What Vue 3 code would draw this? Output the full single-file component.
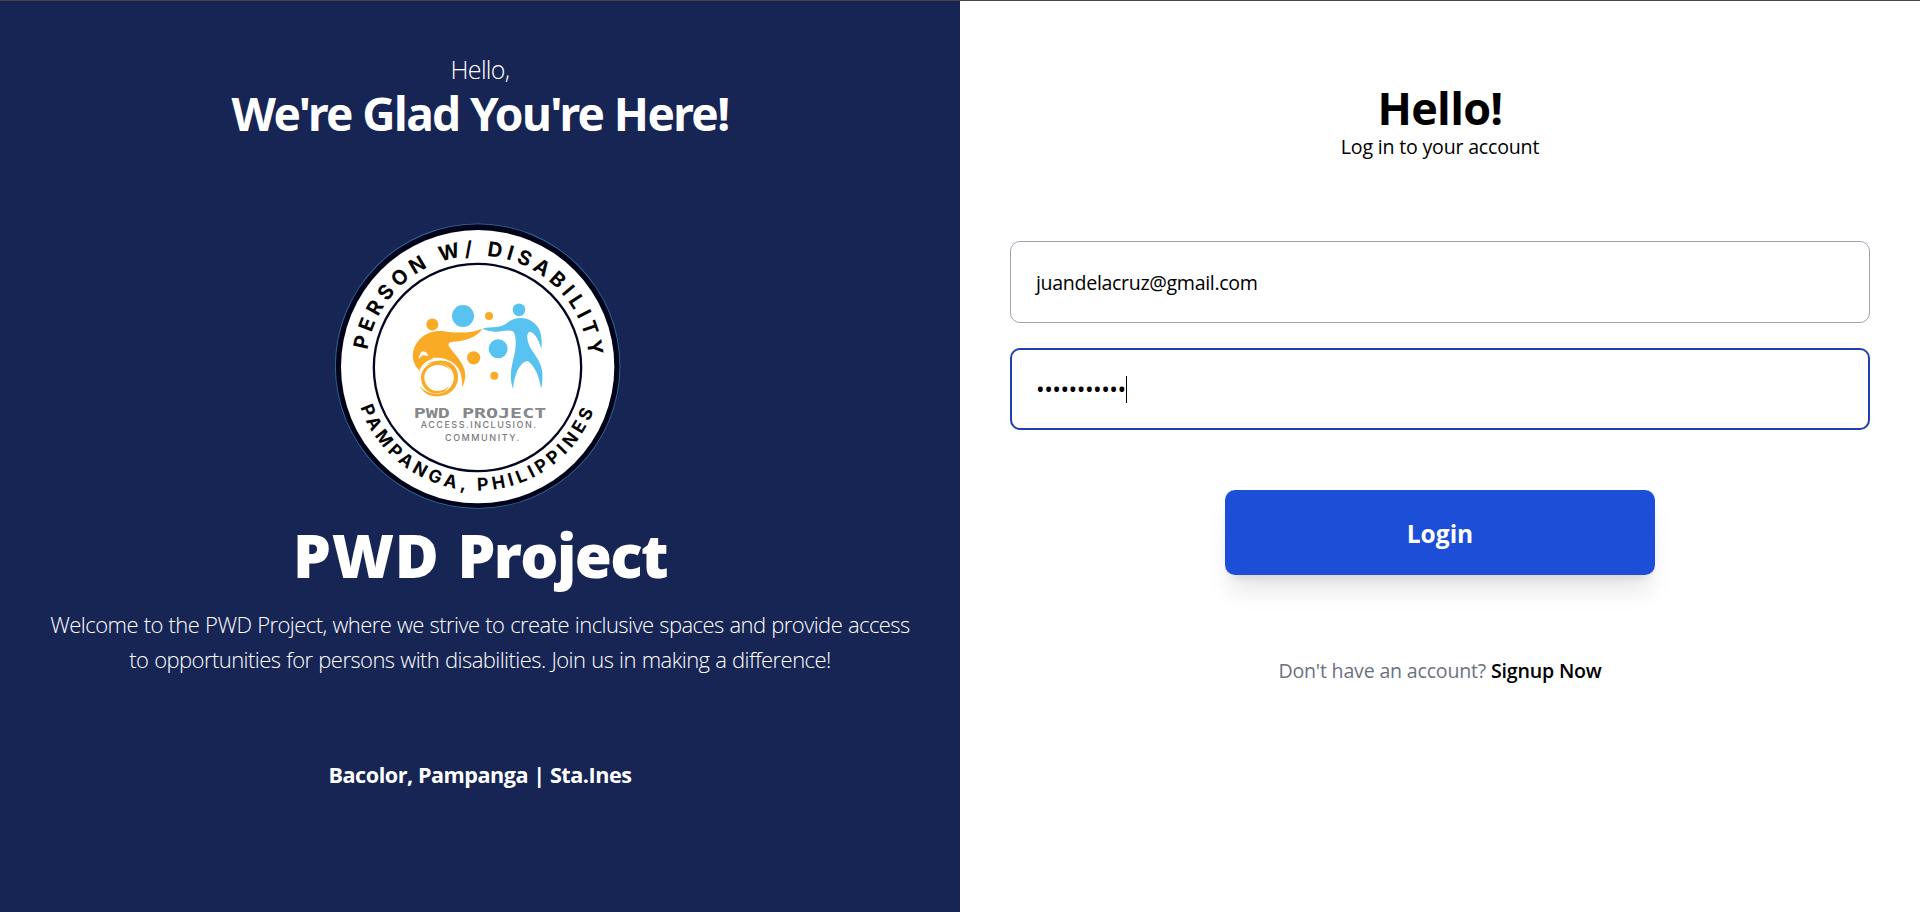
<script setup>
import { ref } from 'vue'

const email = ref('juandelacruz@gmail.com')
const maskedPassword = ref('•'.repeat(11))
</script>

<template>
  <div class="page">
    <section class="intro">
      <p class="greeting">Hello,</p>
      <h1 class="welcome">We're Glad You're Here!</h1>

      <svg class="seal" viewBox="0 0 960 900" role="img" aria-label="PWD Project seal">
        <defs>
          <path id="arc-top" d="M142 420 A335 335 0 0 1 804 420" />
          <path id="arc-bottom" d="M121 592 A373 373 0 0 0 825 592" />
        </defs>
        <circle cx="473" cy="468.500" r="428" fill="#2f6f9f" />
        <circle cx="473" cy="468.500" r="425.500" fill="#02041a" />
        <circle cx="473" cy="470" r="410" fill="#fff" />
        <circle cx="472.500" cy="472.500" r="311" fill="none" stroke="#050722" stroke-width="7" />

        <text class="rim rim-top" textLength="966">
          <textPath href="#arc-top" textLength="966">PERSON W/ DISABILITY</textPath>
        </text>
        <text class="rim rim-bottom" textLength="908">
          <textPath href="#arc-bottom" textLength="908">PAMPANGA, PHILIPPINES</textPath>
        </text>

        <g fill="#f9ab26">
          <circle cx="337" cy="343.500" r="18" />
          <circle cx="507" cy="318" r="12" />
          <circle cx="461" cy="443.500" r="20" />
          <circle cx="523" cy="497" r="12" />
          <path d="M487 356C474 378 440 393 400 395C388 396 383 399 387 409C398 428 436 460 436 495C436 510 431 523 426 531C428 500 420 475 404 463C383 442 343 440 325 447C327 435 319 424 308 424C296 430 292 450 300 483C270 455 273 415 300 387C320 366 350 361 372 364C410 370 455 370 487 356Z" />
          <path d="M299 527C310 553 342 566 372 556C408 545 424 508 408 476C394 449 351 443 316 465C350 453 385 459 398 486C411 516 386 550 352 551C328 551 309 541 299 527Z" />
          <path d="M369 547C330 560 303 533 303 503C303 472 333 451 366 461C376 464 389 472 393 484C383 470 368 465 353 465C331 465 313 481 313 503C313 524 331 543 352 543C365 544 378 538 386 529C382 537 377 543 369 547Z" />
          <path d="M300 483C305 462 320 450 340 447L325 438L308 436L292 450Z" />
        </g>
        <path d="M302 480C310 460 330 449 356 449" fill="none" stroke="#fff" stroke-width="4" />
        <g fill="#58c2f0">
          <circle cx="429" cy="318" r="33" />
          <circle cx="534.500" cy="416" r="28.500" />
          <circle cx="597" cy="299.500" r="19" />
          <path d="M487 356C520 348 538 357 560 340C582 320 613 321 630 331C659 346 669 374 664 417C655 384 642 367 630 365C616 368 621 399 636 421C652 445 666 465 667 489C668 508 667 523 663 535C658 500 643 465 623 453C600 456 583 490 579 537C565 495 577 465 584 430C589 400 589 377 579 364C556 355 532 376 487 356Z" />
        </g>

        <text class="brand" x="281" y="624" textLength="398" lengthAdjust="spacingAndGlyphs">PWD PROJECT</text>
        <text class="motto" x="302" y="655" textLength="346">ACCESS.INCLUSION.</text>
        <text class="motto" x="375" y="693" textLength="223">COMMUNITY.</text>
      </svg>

      <h2 class="name"><span class="acronym">PWD</span> Project</h2>
      <p class="about">
        Welcome to the PWD Project, where we strive to create inclusive spaces and provide access
        to opportunities for persons with disabilities. Join us in making a difference!
      </p>
      <p class="place">Bacolor, Pampanga | Sta.Ines</p>
    </section>

    <main class="login">
      <h1 class="title">Hello!</h1>
      <p class="subtitle">Log in to your account</p>
      <div class="field">{{ email }}</div>
      <div class="field focused">
        <span class="dots">{{ maskedPassword }}</span><span class="caret"></span>
      </div>
      <button class="submit" type="button">Login</button>
      <p class="signup">Don't have an account? <a>Signup Now</a></p>
    </main>
  </div>
</template>

<style>
body {
  margin: 0;
  overflow: hidden;
}
</style>

<style scoped>
.page {
  box-sizing: border-box;
  display: grid;
  grid-template-columns: 1fr 1fr;
  width: 100%;
  height: 912px;
  border-top: 1px solid #454545;
  background: #fff;
  font-family: "Open Sans", "Noto Sans", sans-serif;
}

h1,
h2,
p {
  margin: 0;
}

.intro,
.login {
  display: flex;
  flex-direction: column;
  align-items: center;
  text-align: center;
}

.intro {
  background: #172554;
  color: #fff;
}

.greeting {
  margin-top: 50px;
  font-size: 25px;
  font-weight: 300;
  line-height: 36px;
  letter-spacing: -0.7px;
}

.welcome {
  margin-top: -1px;
  font-family: "Noto Sans", sans-serif;
  font-size: 46px;
  font-weight: 700;
  line-height: 54px;
  letter-spacing: -1.6px;
}

.seal {
  display: block;
  width: 320px;
  height: 300px;
  margin-top: 70px;
}

.rim {
  fill: #050505;
  font-family: Inter, sans-serif;
  font-weight: 700;
}

.rim-top {
  font-size: 61px;
}

.rim-bottom {
  font-size: 53px;
}

.brand {
  fill: #85878a;
  font: 700 40px "DejaVu Sans Mono", monospace;
}

.motto {
  fill: #77797c;
  font: 500 27px Inter, sans-serif;
}

.name {
  margin-top: 9px;
  font-size: 60px;
  font-weight: 800;
  line-height: 72px;
  letter-spacing: -1.6px;
  word-spacing: 4px;
}

.acronym {
  letter-spacing: 0.7px;
}

.about {
  width: 880px;
  margin-top: 16px;
  font-size: 22px;
  font-weight: 300;
  line-height: 35px;
  letter-spacing: -0.56px;
  word-spacing: 0.6px;
}

.place {
  margin-top: 83px;
  font-size: 21.6px;
  font-weight: 700;
  line-height: 30px;
  letter-spacing: -0.46px;
}

.login {
  color: #000;
}

.title {
  margin-top: 80px;
  font-size: 45px;
  font-weight: 700;
  line-height: 54px;
  letter-spacing: -0.7px;
}

.subtitle {
  margin: -2px 0 80px;
  font-size: 19.6px;
  line-height: 28px;
  letter-spacing: -0.2px;
}

.field {
  box-sizing: border-box;
  display: flex;
  align-items: center;
  width: 860px;
  height: 82px;
  margin-bottom: 25px;
  padding: 1px 25px 0;
  border: 1px solid #9ca3af;
  border-radius: 10px;
  font-size: 19.6px;
  letter-spacing: -0.33px;
}

.focused {
  padding: 0 24px;
  border: 2px solid #1e40af;
}

.dots {
  font-size: 23px;
  line-height: 28px;
  letter-spacing: -0.5px;
}

.caret {
  width: 1px;
  height: 27px;
  background: #000;
}

.submit {
  width: 430px;
  height: 85px;
  margin-top: 35px;
  padding: 2px 0 0;
  border: 0;
  border-radius: 10px;
  background: #1d4ed8;
  box-shadow: 0 20px 25px -5px rgb(0 0 0 / 0.1), 0 8px 10px -6px rgb(0 0 0 / 0.1);
  color: #fff;
  font: 700 24.5px "Open Sans", sans-serif;
}

.signup {
  margin-top: 82px;
  color: #6b7280;
  font-size: 19.6px;
  line-height: 28px;
  letter-spacing: -0.2px;
}

.signup a {
  color: #000;
  font-weight: 600;
}
</style>
